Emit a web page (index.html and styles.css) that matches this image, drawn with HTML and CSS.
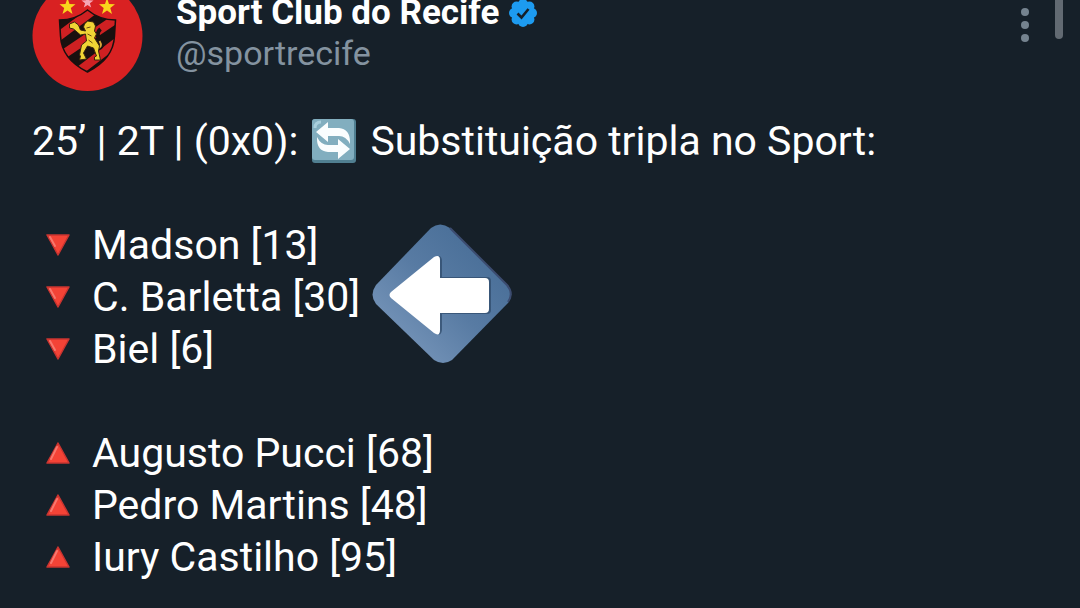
FILE: index.html
```html
<!DOCTYPE html>
<html lang="pt-BR">
<head>
<meta charset="utf-8">
<title>Sport Club do Recife</title>
<link rel="stylesheet" href="styles.css">
</head>
<body>
<article class="post">
  <header class="post-header">
    <svg class="avatar" viewBox="0 0 110 110" aria-hidden="true">
      <circle cx="55" cy="55" r="55" fill="#d92122"/>
      <g fill="#f9d51c">
        <path d="M35 17l2 6 6 .2-4.700 3.800 1.700 6-5-3.500-5 3.500 1.700-6-4.700-3.800 6-.2z"/>
        <path d="M74.500 17l2 6 6 .2-4.700 3.800 1.700 6-5-3.500-5 3.500 1.700-6-4.700-3.800 6-.2z"/>
      </g>
      <path d="M55 15l1.500 4.300 4.500.1-3.600 2.800 1.300 4.400-3.700-2.600-3.700 2.600 1.300-4.400-3.600-2.800 4.500-.1z" fill="#f5a5b5"/>
      <clipPath id="shield"><path d="M27 39Q43 39 55 29Q67 39 83 39L82 55Q81 78 55 91Q29 78 28 55z"/></clipPath>
      <g clip-path="url(#shield)">
        <path d="M20 20h70v75H20z" fill="#19100f"/>
        <path d="M24 57L60 30M24 78L86 36M44 92L86 60" stroke="#cf2022" stroke-width="9"/>
      </g>
      <path d="M27 39Q43 39 55 29Q67 39 83 39L82 55Q81 78 55 91Q29 78 28 55z" fill="none" stroke="#19100f" stroke-width="1.500"/>
      <path d="M64 68Q73 66 67 59Q63 52 68 48" fill="none" stroke="#19100f" stroke-width="4"/>
      <path d="M64 68Q71 66 67 60" fill="none" stroke="#d9a63a" stroke-width="2"/>
      <path d="M52 43l3-3 6 1 2 4-1 5 2 3-2 4 5 8-1 5 2 9h-6v-3l2-1-3-8-6-2-4 7 3 6-7 1 1-4-1-1 2-10 5-4-1-7-5 1-7-6-4-1v-4l5-2 4 3 2 5 5 1-2-4z" fill="#f0d435" stroke="#3a250c" stroke-width="1"/>
      <path d="M54 47l4-1M55 53l4 2M56 59l4 3" stroke="#6b4b12" stroke-width="1"/>
    </svg>
    <div class="author">
      <div class="name-row">
        <span class="name">Sport Club do Recife</span>
        <svg class="badge" viewBox="0 0 28 28" role="img" aria-label="Verificado">
          <g fill="#1d9bf0"><circle cx="14" cy="14" r="11"/><circle cx="14" cy="5" r="5"/><circle cx="20.400" cy="7.600" r="5"/><circle cx="23" cy="14" r="5"/><circle cx="20.400" cy="20.400" r="5"/><circle cx="14" cy="23" r="5"/><circle cx="7.600" cy="20.400" r="5"/><circle cx="5" cy="14" r="5"/><circle cx="7.600" cy="7.600" r="5"/></g>
          <path d="M8.500 14.500l4 4 7-8.500" fill="none" stroke="#162029" stroke-width="2.600"/>
        </svg>
      </div>
      <span class="handle">@sportrecife</span>
    </div>
    <button class="more" type="button" aria-label="Mais opções">
      <svg class="dots" viewBox="0 0 8 34" fill="#75838f" aria-hidden="true"><circle cx="4" cy="4" r="4"/><circle cx="4" cy="17" r="4"/><circle cx="4" cy="30" r="4"/></svg>
    </button>
  </header>

  <p class="headline">
    <span>25’ | 2T | (0x0):</span>
    <svg class="swap" viewBox="0 0 44 44" aria-hidden="true">
      <rect width="44" height="44" rx="3" fill="#507f91"/>
      <rect width="42" height="41" rx="3" fill="#82aebf"/>
      <path d="M3 9Q3 3 9 3" fill="none" stroke="#a9cfdd" stroke-width="3"/>
      <path d="M4 13L16 3v6h11q11 1 11 14v2q-4-8-11-8H16v6zM38 30L26 40v-7H16Q5 32 5 20v-2q4 8 11 8h10v-6z" fill="#fafdfe"/>
    </svg>
    <span>Substituição tripla no Sport:</span>
  </p>

  <ul class="players">
    <li><svg class="mark" viewBox="0 0 24 22" aria-hidden="true"><path d="M1 1h22L12 21z" fill="#f44336" stroke="#c93430" stroke-width="1.500" stroke-linejoin="round"/><path d="M4 3l5 9" stroke="#f8776d" stroke-width="2" stroke-linecap="round"/></svg>Madson [13]</li>
    <li class="highlighted"><svg class="mark" viewBox="0 0 24 22" aria-hidden="true"><path d="M1 1h22L12 21z" fill="#f44336" stroke="#c93430" stroke-width="1.500" stroke-linejoin="round"/><path d="M4 3l5 9" stroke="#f8776d" stroke-width="2" stroke-linecap="round"/></svg>C. Barletta [30]
      <svg class="pointer" viewBox="0 0 142 142" aria-hidden="true">
        <defs><linearGradient id="tile" x1="1" y1="0" x2="0" y2="1"><stop offset="0" stop-color="#416892"/><stop offset=".5" stop-color="#587ba3"/><stop offset="1" stop-color="#829fc2"/></linearGradient></defs>
        <path d="M60 5Q69-2 79 5L136 62Q144 71 137 80L81 137Q72 143 63 137L5 81Q-2 72 5 62z" fill="url(#tile)"/>
        <path d="M79 5L136 62Q143 70 137 79" fill="none" stroke="#3c4c70" stroke-width="2"/>
        <path d="M22 69L65 34Q70 31 71 37V54H116Q120 54 120 58V87Q120 91 116 91H71V107Q70 114 65 110L22 75Q18 72 22 69z" fill="#2e4868" opacity=".7"/>
        <path d="M20 69L63 34Q69 31 69 37V55H114Q118 55 118 59V86Q118 90 114 90H69V107Q69 114 63 110L20 75Q17 72 20 69z" fill="#fff"/>
      </svg>
    </li>
    <li><svg class="mark" viewBox="0 0 24 22" aria-hidden="true"><path d="M1 1h22L12 21z" fill="#f44336" stroke="#c93430" stroke-width="1.500" stroke-linejoin="round"/><path d="M4 3l5 9" stroke="#f8776d" stroke-width="2" stroke-linecap="round"/></svg>Biel [6]</li>
  </ul>

  <ul class="players">
    <li><svg class="mark" viewBox="0 0 24 22" aria-hidden="true"><path d="M1 21h22L12 1z" fill="#f44336" stroke="#c93430" stroke-width="1.500" stroke-linejoin="round"/><path d="M5 17l6-12" stroke="#f8776d" stroke-width="2" stroke-linecap="round"/></svg>Augusto Pucci [68]</li>
    <li><svg class="mark" viewBox="0 0 24 22" aria-hidden="true"><path d="M1 21h22L12 1z" fill="#f44336" stroke="#c93430" stroke-width="1.500" stroke-linejoin="round"/><path d="M5 17l6-12" stroke="#f8776d" stroke-width="2" stroke-linecap="round"/></svg>Pedro Martins [48]</li>
    <li><svg class="mark" viewBox="0 0 24 22" aria-hidden="true"><path d="M1 21h22L12 1z" fill="#f44336" stroke="#c93430" stroke-width="1.500" stroke-linejoin="round"/><path d="M5 17l6-12" stroke="#f8776d" stroke-width="2" stroke-linecap="round"/></svg>Iury Castilho [95]</li>
  </ul>
</article>
<div class="scroll-thumb"></div>
</body>
</html>
```
FILE: styles.css
```css
* { box-sizing: border-box; }

body {
  margin: 0;
  background: #162029;
  color: #fff;
  font-family: Roboto, "Liberation Sans", sans-serif;
}

.post {
  display: flow-root;
  padding: 0 32px 24px;
}

/* The post is scrolled slightly past the top edge. */
.post-header {
  display: flex;
  align-items: flex-start;
  gap: 33px;
  margin-top: -19px;
}

.avatar {
  flex: none;
  width: 111px;
  height: 110px;
}

.author {
  flex: 1;
  min-width: 0;
  padding-top: 12px;
}

.name-row {
  display: flex;
  align-items: center;
  gap: 10px;
}

.name {
  font-size: 35px;
  line-height: 40px;
  font-weight: 700;
}

.badge {
  width: 28px;
  height: 28px;
}

.handle {
  display: block;
  color: #8493a0;
  font-size: 34px;
  line-height: 40px;
}

.more {
  display: flex;
  justify-content: center;
  width: 46px;
  padding: 27px 0 0;
  border: 0;
  background: none;
}

.dots {
  width: 8px;
  height: 34px;
}

.headline,
.players {
  margin: 0;
  padding: 0;
  font-size: 41px;
  line-height: 52px;
}

.headline {
  display: flex;
  flex-wrap: wrap;
  align-items: center;
  column-gap: 14px;
  margin-top: 24px;
}

.swap {
  width: 44px;
  height: 44px;
}

.players {
  margin-top: 52px;
  list-style: none;
}

.players li {
  display: flex;
  align-items: center;
  gap: 22px;
  padding-left: 14px;
}

.mark {
  flex: none;
  width: 24px;
  height: 22px;
}

.highlighted {
  position: relative;
}

.pointer {
  position: absolute;
  top: -48px;
  left: 339px;
  width: 142px;
  height: 142px;
}

.scroll-thumb {
  position: absolute;
  top: 0;
  right: 17px;
  width: 8px;
  height: 39px;
  border-radius: 0 0 4px 4px;
  background: #626a72;
}
```
